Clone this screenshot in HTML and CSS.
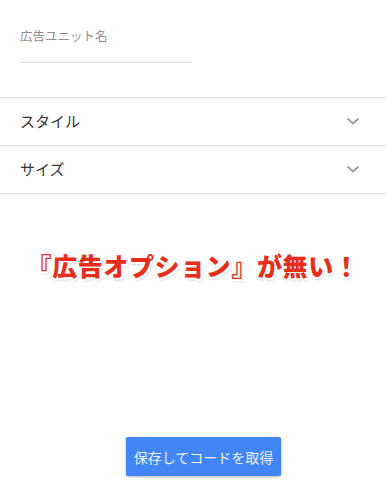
FILE: index.html
```html
<!DOCTYPE html>
<html lang="ja">
<head>
<meta charset="utf-8">
<link rel="stylesheet" href="styles.css">
</head>
<body>
<main class="page">
  <section class="field">
    <div class="field-label">広告ユニット名</div>
    <div class="field-line"></div>
  </section>
  <div class="row">
    <span class="row-title">スタイル</span>
    <svg class="chevron" width="14" height="8" viewBox="0 0 14 8"><path d="M1.5 1.5 L7 6.5 L12.5 1.5" fill="none" stroke="#9e9e9e" stroke-width="1.8"/></svg>
  </div>
  <div class="row">
    <span class="row-title">サイズ</span>
    <svg class="chevron" width="14" height="8" viewBox="0 0 14 8"><path d="M1.5 1.5 L7 6.5 L12.5 1.5" fill="none" stroke="#9e9e9e" stroke-width="1.8"/></svg>
  </div>
  <p class="notice">『広告オプション』が無い！</p>
  <button class="save-btn">保存してコードを取得</button>
</main>
</body>
</html>
```
FILE: styles.css
```css
html, body {
  margin: 0;
  padding: 0;
  background: #ffffff;
}
body {
  font-family: "Noto Sans CJK JP", "Noto Sans", sans-serif;
  width: 386px;
  height: 500px;
  overflow: hidden;
}
.page {
  display: flex;
  flex-direction: column;
}
.field {
  padding: 29px 20px 0;
  height: 68px;
}
.field-label {
  font-size: 12.5px;
  line-height: 13px;
  color: #8f8f8f;
}
.field-line {
  margin-top: 20px;
  width: 172px;
  height: 1px;
  background: #e0e0e0;
}
.row {
  display: flex;
  align-items: center;
  justify-content: space-between;
  height: 47px;
  border-top: 1px solid #dedede;
  padding: 0 26px 0 20px;
}
.row:last-of-type {
  border-bottom: 1px solid #dedede;
}
.row-title {
  font-size: 15px;
  line-height: 15px;
  padding-bottom: 3px;
  color: #353535;
}
.chevron {
  display: block;
  margin-bottom: 1px;
}
.notice {
  margin: 56px 0 0;
  text-align: center;
  font-size: 25px;
  line-height: 30px;
  font-weight: 900;
  color: #e62e1c;
  letter-spacing: 0.6px;
  text-shadow:
    -1.5px -1.5px 0 #fff, 1.5px -1.5px 0 #fff, -1.5px 1.5px 0 #fff, 1.5px 1.5px 0 #fff,
    0 -2px 0 #fff, 0 2px 0 #fff, -2px 0 0 #fff, 2px 0 0 #fff,
    1px 2px 3px rgba(0, 0, 0, 0.35);
}
.save-btn {
  margin: 157px 0 0 126px;
  width: 155px;
  height: 39px;
  border: none;
  border-radius: 2px;
  background: #4285f4;
  color: #eef3ff;
  font-family: "Noto Sans CJK JP", "Noto Sans", sans-serif;
  font-size: 14px;
  padding: 0;
  box-shadow: 0 1px 3px rgba(0, 0, 0, 0.3);
}
```
